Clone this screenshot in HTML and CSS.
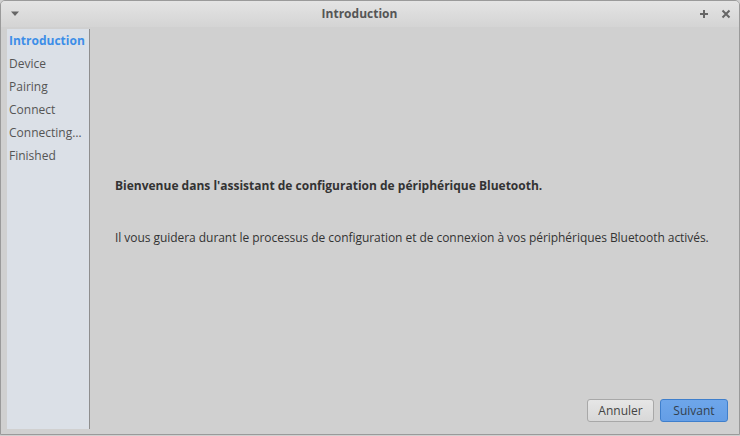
FILE: index.html
```html
<!DOCTYPE html>
<html>
<head>
<meta charset="utf-8">
<link rel="stylesheet" href="styles.css">
</head>
<body>
<div class="window">
  <div class="titlebar">
    <div class="tb-left">
      <svg width="10" height="6" viewBox="0 0 10 6"><path d="M1 0.5 L9 0.5 L5 5 Z" fill="#666"/></svg>
    </div>
    <div class="title">Introduction</div>
    <div class="tb-right">
      <svg width="10" height="10" viewBox="0 0 10 10"><path d="M5 1 V9 M1 5 H9" stroke="#666" stroke-width="2"/></svg>
      <svg width="10" height="10" viewBox="0 0 10 10"><path d="M1.5 1.5 L8.5 8.5 M8.5 1.5 L1.5 8.5" stroke="#666" stroke-width="2"/></svg>
    </div>
  </div>
  <div class="body">
    <div class="sidebar">
      <div class="step active">Introduction</div>
      <div class="step">Device</div>
      <div class="step">Pairing</div>
      <div class="step">Connect</div>
      <div class="step">Connecting…</div>
      <div class="step">Finished</div>
    </div>
    <div class="main">
      <div class="content">
        <p class="heading">Bienvenue dans l'assistant de configuration de périphérique Bluetooth.</p>
        <p class="desc">Il vous guidera durant le processus de configuration et de connexion à vos périphériques Bluetooth activés.</p>
      </div>
      <div class="actions">
        <button class="btn">Annuler</button>
        <button class="btn primary">Suivant</button>
      </div>
    </div>
  </div>
</div>
</body>
</html>
```
FILE: styles.css
```css
html, body {
  margin: 0;
  padding: 0;
  background: #d0d0d0;
}
body {
  font-family: "Open Sans", "Noto Sans", sans-serif;
  font-size: 12px;
  color: #3c3c3c;
}
.window {
  box-sizing: border-box;
  width: 740px;
  height: 435px;
  border: 1px solid #9a9a9a;
  border-radius: 5px 5px 0 0;
  background: #d0d0d0;
  display: flex;
  flex-direction: column;
  overflow: hidden;
}
.titlebar {
  height: 25px;
  flex: none;
  display: flex;
  align-items: center;
  background: linear-gradient(#e4e4e4, #d4d4d4);
  padding: 0 8px 1px 9px;
}
.tb-left {
  width: 60px;
  display: flex;
  align-items: center;
}
.tb-right {
  width: 60px;
  display: flex;
  justify-content: flex-end;
  align-items: center;
  gap: 12px;
}
.title {
  flex: 1;
  text-align: center;
  font-weight: bold;
  color: #555;
  font-size: 12px;
  padding-right: 22px;
}
.body {
  flex: 1;
  display: flex;
  padding: 2px 0 0 6px;
}
.sidebar {
  width: 80px;
  background: #dbe0e7;
  border-right: 1px solid #8e8e8e;
  padding: 3px 0 0 2px;
  margin-bottom: 5px;
}
.step {
  height: 23px;
  line-height: 17px;
  color: #555;
}
.step.active {
  color: #3d8ee8;
  font-weight: bold;
}
.main {
  flex: 1;
  display: flex;
  flex-direction: column;
}
.content {
  flex: 1;
  padding: 148px 0 0 25px;
}
.content p {
  margin: 0;
  line-height: 17px;
}
.heading {
  font-weight: bold;
  color: #333;
}
.desc {
  margin-top: 35px !important;
  color: #333;
  letter-spacing: -0.05px;
}
.actions {
  display: flex;
  justify-content: flex-end;
  gap: 6px;
  padding: 0 11px 12px 0;
}
.btn {
  font-family: inherit;
  font-size: 12px;
  height: 23px;
  width: 67px;
  border: 1px solid #a8a8a8;
  border-radius: 3px;
  background: linear-gradient(#e6e6e6, #d8d8d8);
  color: #444;
  padding: 0;
}
.btn.primary {
  width: 68px;
  background: linear-gradient(#6ea6ea, #649ee6);
  border-color: #3f7fcc;
  color: #33404e;
}
```
